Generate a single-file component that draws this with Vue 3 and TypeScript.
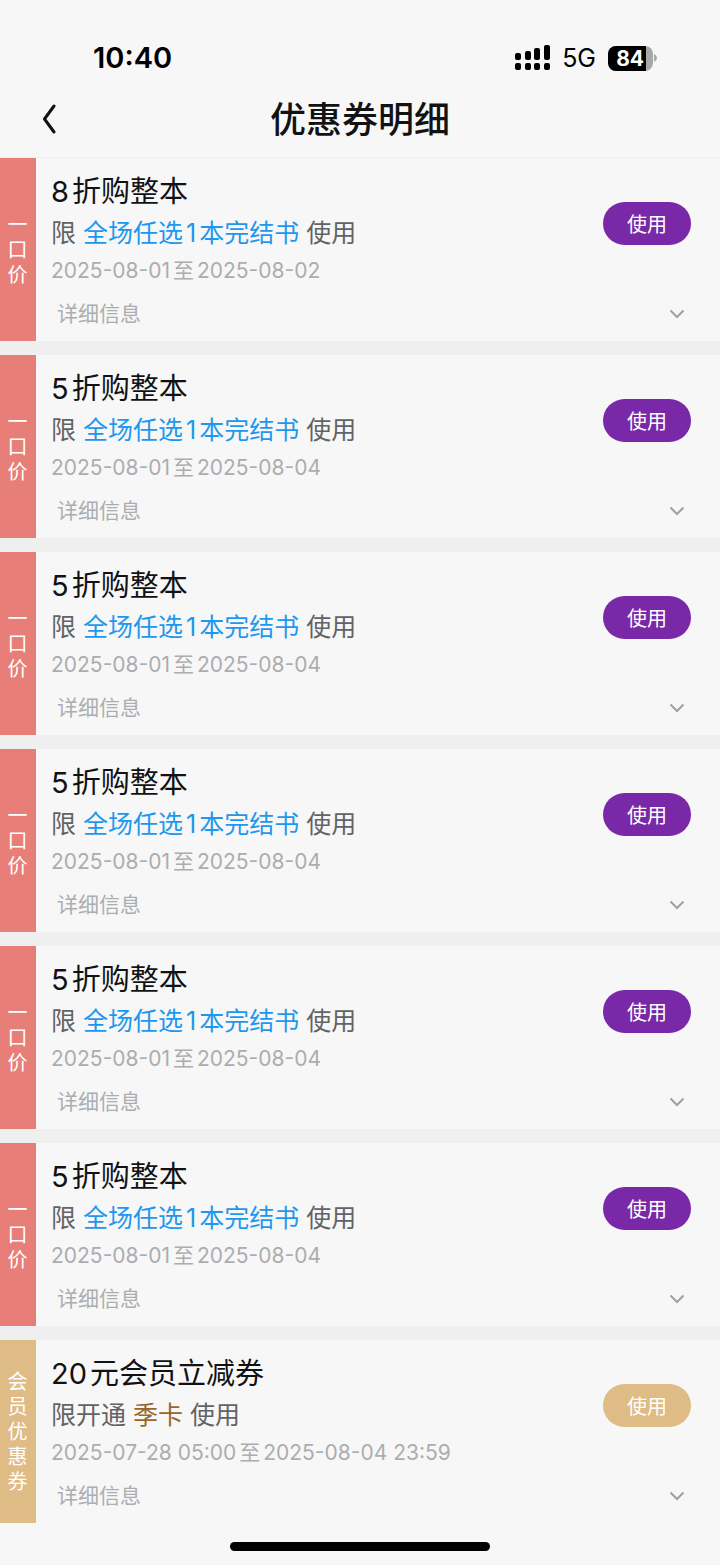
<script setup lang="ts">
import { ref } from 'vue'

interface Coupon {
  id: number
  tag: string
  title: string
  before: string
  scope: string
  from: string
  to: string
  member?: boolean
}

const sale = (id: number, title: string, to: string): Coupon => ({
  id,
  tag: '一口价',
  title,
  before: '限',
  scope: '全场任选1本完结书',
  from: '2025-08-01',
  to,
})

const coupons: Coupon[] = [
  sale(1, '8折购整本', '2025-08-02'),
  sale(2, '5折购整本', '2025-08-04'),
  sale(3, '5折购整本', '2025-08-04'),
  sale(4, '5折购整本', '2025-08-04'),
  sale(5, '5折购整本', '2025-08-04'),
  sale(6, '5折购整本', '2025-08-04'),
  {
    id: 7,
    tag: '会员优惠券',
    title: '20元会员立减券',
    before: '限开通',
    scope: '季卡',
    from: '2025-07-28 05:00',
    to: '2025-08-04 23:59',
    member: true,
  },
]

const selected = ref<number | null>(null)

// Separates digits from the Chinese text around them so that they can be spaced.
const parts = (text: string) =>
  text.split(/(\d+)/).filter(Boolean).map((value) => ({ value, digits: /^\d/.test(value) }))
</script>

<template>
  <div class="page">
    <header class="top">
      <div class="status">
        <span class="clock">10:40</span>
        <div class="indicators">
          <svg class="signal" width="36" height="26" viewBox="0 0 36 26">
            <rect x="0" y="8" width="6" height="7" rx="2" />
            <rect x="10" y="6" width="6" height="9" rx="2" />
            <rect x="19" y="3" width="6" height="12" rx="2" />
            <rect x="29" y="0" width="6" height="15" rx="2" />
            <rect x="0" y="18" width="6" height="7" rx="2" />
            <rect x="10" y="18" width="6" height="7" rx="2" />
            <rect x="19" y="18" width="6" height="7" rx="2" />
            <rect x="29" y="18" width="6" height="7" rx="2" />
          </svg>
          <span class="network">5G</span>
          <span class="battery"><span class="level">84</span></span>
          <svg class="tip" width="3" height="8" viewBox="0 0 3 8"><path d="M0 0Q3 1.5 3 4T0 8Z" /></svg>
        </div>
      </div>
      <div class="nav">
        <button class="back" type="button" aria-label="返回">
          <svg width="14" height="30" viewBox="0 0 14 30"><path d="M12 2 2.5 15 12 28" /></svg>
        </button>
        <h1>优惠券明细</h1>
      </div>
    </header>

    <main class="list">
      <article v-for="c in coupons" :key="c.id" class="coupon" :class="{ member: c.member }">
        <div class="tag"><span v-for="ch in c.tag" :key="ch">{{ ch }}</span></div>
        <div class="body">
          <div class="summary">
            <div class="info">
              <h2><span v-for="(p, i) in parts(c.title)" :key="i" :class="{ digits: p.digits }">{{ p.value }}</span></h2>
              <p class="rule">{{ c.before }} <span class="scope"><span v-for="(p, i) in parts(c.scope)" :key="i" :class="{ digits: p.digits }">{{ p.value }}</span></span> 使用</p>
              <p class="dates"><time>{{ c.from }}</time><span class="sep">至</span><time>{{ c.to }}</time></p>
            </div>
            <button class="use" type="button" @click="selected = c.id">使用</button>
          </div>
          <button class="details" type="button">
            <span>详细信息</span>
            <svg width="16" height="10" viewBox="0 0 16 10"><path d="M1.5 1.5 8 8l6.5-6.5" /></svg>
          </button>
        </div>
      </article>
    </main>

    <footer class="home"><span></span></footer>
  </div>
</template>

<style>
body {
  margin: 0;
  background: #f7f7f7;
}
</style>

<style scoped>
.page {
  min-height: 100vh;
  background: #f7f7f7;
  color: #111214;
  font-family: Inter, "Noto Sans CJK SC", sans-serif;
}
h1, h2, p {
  margin: 0;
  font-weight: 400;
}
button {
  padding: 0;
  border: 0;
  background: none;
  font: inherit;
  cursor: pointer;
}
svg {
  display: block;
  flex: none;
}
.top {
  border-bottom: 1px solid #f0f0f0;
}
.status {
  display: flex;
  align-items: center;
  justify-content: space-between;
  padding: 36px 63px 0 93px;
  line-height: 44px;
  color: #000;
}
.clock {
  font-size: 29px;
  font-weight: 600;
}
.indicators {
  display: flex;
  align-items: center;
}
.network {
  margin: 0 12px 0 11px;
  font-size: 25px;
}
.battery {
  display: flex;
  width: 45px;
  height: 25px;
  border-radius: 8px;
  overflow: hidden;
  background: #a8a8a8;
}
.level {
  box-sizing: border-box;
  width: 38px;
  padding-right: 2px;
  background: #000;
  color: #fff;
  font-size: 21px;
  font-weight: 700;
  line-height: 25px;
  text-align: right;
}
.tip {
  margin-left: 1px;
  fill: #a8a8a8;
}
.nav {
  display: grid;
  grid-template-columns: 62px 1fr 62px;
  align-items: center;
  height: 77px;
}
.back {
  justify-self: end;
  padding: 6px;
}
.back path {
  fill: none;
  stroke: #111214;
  stroke-width: 3;
  stroke-linecap: round;
  stroke-linejoin: round;
}
h1 {
  padding-top: 2px;
  font-size: 36px;
  font-weight: 500;
  line-height: 48px;
  text-align: center;
}
.list {
  display: grid;
  gap: 14px;
  background: #efefef;
}
.coupon {
  display: flex;
  background: #f7f7f7;
}
.tag {
  display: flex;
  flex: none;
  flex-direction: column;
  align-items: center;
  justify-content: center;
  box-sizing: border-box;
  width: 36px;
  padding: 2px 1px 0 0;
  background: #e77e78;
  color: #fff;
  font-size: 20px;
  line-height: 25px;
}
.member .tag,
.member .use {
  background: #dfbb86;
}
.body {
  flex: 1;
  padding: 0 29px 2px 15px;
}
.summary {
  display: flex;
  align-items: center;
  justify-content: space-between;
}
.info {
  padding-top: 13px;
}
h2 {
  font-size: 29px;
  line-height: 42px;
}
h2 .digits {
  margin-right: 3px;
}
.rule {
  color: #626365;
  font-size: 25px;
  line-height: 40px;
}
.scope {
  color: #1e98ee;
}
.scope .digits {
  margin: 0 3px;
}
.member .scope {
  color: #99652b;
}
.dates {
  color: #acadb0;
  font-size: 21px;
  line-height: 36px;
}
.sep {
  margin: 0 3px;
}
.use {
  width: 88px;
  height: 43px;
  border-radius: 22px;
  background: #7928a7;
  color: #fff;
  font-size: 20px;
}
.details {
  display: flex;
  align-items: center;
  justify-content: space-between;
  width: 100%;
  padding: 0 6px;
  color: #acadb0;
  font-size: 21px;
  line-height: 50px;
}
.details path {
  fill: none;
  stroke: #a0a0a2;
  stroke-width: 2;
}
.home {
  display: flex;
  justify-content: center;
  padding: 19px 0 14px;
}
.home span {
  width: 36%;
  height: 9px;
  border-radius: 5px;
  background: #000;
}
</style>
